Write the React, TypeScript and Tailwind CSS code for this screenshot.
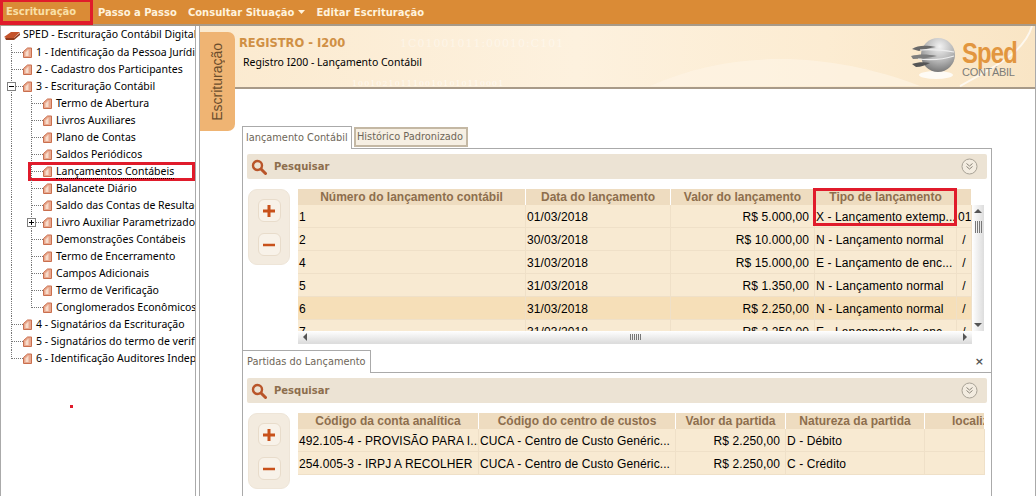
import React from "react";

const tree: { label: string; level: number; toggle?: "minus" | "plus"; last?: boolean; selected?: boolean }[] = [
  { label: "1 - Identificação da Pessoa Jurídica", level: 1 },
  { label: "2 - Cadastro dos Participantes", level: 1 },
  { label: "3 - Escrituração Contábil", level: 1, toggle: "minus" },
  { label: "Termo de Abertura", level: 2 },
  { label: "Livros Auxiliares", level: 2 },
  { label: "Plano de Contas", level: 2 },
  { label: "Saldos Periódicos", level: 2 },
  { label: "Lançamentos Contábeis", level: 2, selected: true },
  { label: "Balancete Diário", level: 2 },
  { label: "Saldo das Contas de Resultado", level: 2 },
  { label: "Livro Auxiliar Parametrizado", level: 2, toggle: "plus" },
  { label: "Demonstrações Contábeis", level: 2 },
  { label: "Termo de Encerramento", level: 2 },
  { label: "Campos Adicionais", level: 2 },
  { label: "Termo de Verificação", level: 2 },
  { label: "Conglomerados Econômicos", level: 2, last: true },
  { label: "4 - Signatários da Escrituração", level: 1 },
  { label: "5 - Signatários do termo de verificação", level: 1 },
  { label: "6 - Identificação Auditores Independentes", level: 1, last: true },
];

function NodeIcon() {
  return (
    <svg width="9" height="11" viewBox="0 0 9 11" className="shrink-0">
      <path d="M.5 10.500V4.500L4.500 1h4v9.500z" fill="#e9a88e" stroke="#c96f4e" strokeWidth="1" />
      <path d="M2.500 5.500 5.500 2.500V9h-3z" fill="#f8dccb" />
    </svg>
  );
}

function ToggleBox({ type }: { type: "minus" | "plus" }) {
  return (
    <span className="absolute left-0 top-[4px] z-10 flex h-[9px] w-[9px] items-center justify-center border border-[#808080] bg-white">
      <span className="relative block h-px w-[5px] bg-black">
        {type === "plus" && <span className="absolute left-[2px] top-[-2px] block h-[5px] w-px bg-black" />}
      </span>
    </span>
  );
}

function TreeRow({ label, level, toggle, last, selected }: (typeof tree)[number]) {
  return (
    <div className="relative flex h-[17px] items-center whitespace-nowrap">
      {/* linhas pontilhadas da arvore */}
      <span className={`absolute left-[10px] top-0 border-l border-dotted border-[#777] ${level === 1 && last ? "h-[9px]" : "h-[17px]"}`} />
      {level === 2 && (
        <span className={`absolute left-[30px] top-0 border-l border-dotted border-[#777] ${last ? "h-[9px]" : "h-[17px]"}`} />
      )}
      <span className={`absolute top-[8px] w-[12px] border-t border-dotted border-[#777] ${level === 1 ? "left-[10px]" : "left-[30px]"}`} />
      {toggle && (
        <span className={`absolute top-0 h-[17px] w-[9px] ${level === 1 ? "left-[6px]" : "left-[26px]"}`}>
          <ToggleBox type={toggle} />
        </span>
      )}
      <span className={`z-10 flex items-center gap-[4px] ${level === 1 ? "ml-[22px]" : "ml-[42px]"}`}>
        <NodeIcon />
        <span className={selected ? "border-b border-dotted border-black leading-[13px]" : ""}>{label}</span>
      </span>
      {selected && <span className="absolute left-[27px] top-[-1px] h-[19px] w-[167px] border-[3px] border-[#e01b2b]" />}
    </div>
  );
}

function SearchBar() {
  return (
    <div className="flex h-[25px] items-center justify-between rounded-[2px] bg-[#ece3d4] pl-[4px] pr-[9px]">
      <div className="flex items-center gap-[7px]">
        <svg width="16" height="16" viewBox="0 0 16 16">
          <circle cx="6.500" cy="6.500" r="4.500" fill="none" stroke="#b9552a" strokeWidth="2.400" />
          <path d="M10 10l4.500 4.500" stroke="#b9552a" strokeWidth="3" strokeLinecap="round" />
        </svg>
        <span className="font-['DejaVu_Sans'] text-[10px] font-bold text-[#8d6e4d]">Pesquisar</span>
      </div>
      <svg width="17" height="17" viewBox="0 0 17 17">
        <circle cx="8.500" cy="8.500" r="7.500" fill="#f3ece0" stroke="#a8a296" strokeWidth="1" />
        <path d="M5.500 5.500 8.500 8l3-2.500M5.500 8.500 8.500 11l3-2.500" fill="none" stroke="#8a8478" strokeWidth="1" />
      </svg>
    </div>
  );
}

function AddRemove() {
  return (
    <div className="flex h-[76px] w-[42px] shrink-0 flex-col items-center gap-[11px] rounded-[9px] border border-[#eee5d8] bg-[#f3ebdf] pt-[9px]">
      <div className="flex h-[23px] w-[23px] items-center justify-center rounded-[6px] border border-[#e8dccb] bg-[#f8f2e9]">
        <svg width="14" height="14" viewBox="0 0 14 14">
          <path d="M7 1v12M1 7h12" stroke="#c8511b" strokeWidth="3" />
        </svg>
      </div>
      <div className="flex h-[23px] w-[23px] items-center justify-center rounded-[6px] border border-[#e8dccb] bg-[#f8f2e9]">
        <svg width="14" height="14" viewBox="0 0 14 14">
          <path d="M1 7h12" stroke="#c8511b" strokeWidth="2.500" />
        </svg>
      </div>
    </div>
  );
}

function Cell({ text, width, right, center }: { text: string; width: number; right?: boolean; center?: boolean }) {
  return (
    <div
      style={{ width }}
      className={`h-full shrink-0 overflow-hidden whitespace-nowrap border-r border-[#efe0c8] px-[1px] leading-[24px] tracking-[0.1px] ${right ? "pr-[5px] text-right" : ""} ${center ? "text-center" : ""}`}
    >
      {text}
    </div>
  );
}

function HeaderRow({ cols }: { cols: { title: string; width: number }[] }) {
  return (
    <div className="flex h-[16px] font-bold text-[#8d6e4d]">
      {cols.map((c) => (
        <div
          key={c.title}
          style={{ width: c.width }}
          className={`shrink-0 overflow-hidden whitespace-nowrap border-r border-white bg-[#eedcc0] leading-[17px] ${c.title === "localização" ? "pl-[27px] text-left" : "text-center"}`}
        >
          {c.title}
        </div>
      ))}
    </div>
  );
}

const cols1 = [
  { title: "Número do lançamento contábil", width: 228 },
  { title: "Data do lançamento", width: 145 },
  { title: "Valor do lançamento", width: 144 },
  { title: "Tipo de lançamento", width: 142 },
  { title: "", width: 15 },
];

const rows1 = [
  ["1", "01/03/2018", "R$ 5.000,00", "X - Lançamento extemp...", "01"],
  ["2", "30/03/2018", "R$ 10.000,00", "N - Lançamento normal", "/"],
  ["4", "31/03/2018", "R$ 15.000,00", "E - Lançamento de enc...", "/"],
  ["5", "31/03/2018", "R$ 1.350,00", "N - Lançamento normal", "/"],
  ["6", "31/03/2018", "R$ 2.250,00", "N - Lançamento normal", "/"],
  ["7", "31/03/2018", "R$ 2.250,00", "E - Lançamento de enc...", "/"],
];

const cols2 = [
  { title: "Código da conta analítica", width: 181 },
  { title: "Código do centro de custos", width: 197 },
  { title: "Valor da partida", width: 110 },
  { title: "Natureza da partida", width: 139 },
  { title: "localização", width: 60 },
];

const rows2 = [
  ["492.105-4 - PROVISÃO PARA I...", "CUCA - Centro de Custo Genéric...", "R$ 2.250,00", "D - Débito", ""],
  ["254.005-3 - IRPJ A RECOLHER", "CUCA - Centro de Custo Genéric...", "R$ 2.250,00", "C - Crédito", ""],
];

function Arrow({ dir }: { dir: "up" | "down" | "left" | "right" }) {
  const d = { up: "M4 2 8 6H0z", down: "M4 6 0 2h8z", left: "M2 4 6 0v8z", right: "M6 4 2 8V0z" }[dir];
  return (
    <svg width="8" height="8" viewBox="0 0 8 8">
      <path d={d} fill="#555" />
    </svg>
  );
}

function Grip({ vertical }: { vertical?: boolean }) {
  return (
    <span className={`block bg-[repeating-linear-gradient(90deg,#777_0_1px,transparent_1px_2px)] ${vertical ? "h-[12px] w-[7px]" : "h-[6px] w-[11px]"}`} />
  );
}

function Sped() {
  return (
    <div className="absolute right-[23px] top-[10px] flex items-center gap-[4px]">
      <svg width="48" height="44" viewBox="0 0 48 44">
        <defs>
          <radialGradient id="esfera" cx="55%" cy="25%" r="80%">
            <stop offset="0" stopColor="#f2f2f2" />
            <stop offset="0.55" stopColor="#b4b4b4" />
            <stop offset="1" stopColor="#6f6f6f" />
          </radialGradient>
        </defs>
        <ellipse cx="26" cy="39" rx="17" ry="4" fill="#fff" opacity="0.8" />
        <circle cx="28" cy="19" r="17" fill="url(#esfera)" />
        <path d="M2 13c6-4 14-4 24-2-6 1-12 2-17 4z" fill="#6a6a6a" />
        <path d="M1 20c8-2 16-2 26 0-8 2-17 3-24 3z" fill="#7e7e7e" />
        <path d="M2 28c6-2 12-2 18-1-4 2-9 4-14 4z" fill="#555" />
        <path d="M10 14c10-1 22 0 34 2M8 23c10 1 24 1 36-3" fill="none" stroke="#eee" strokeWidth="1.200" />
      </svg>
      <div className="flex w-[50px] flex-col items-start font-['Liberation_Sans']">
        <span className="inline-block origin-left scale-x-[0.82] text-[29px] font-bold leading-[28px] tracking-[-1px] text-[#e2963f]">Sped</span>
        <span className="text-[11px] leading-[10px] tracking-[-0.300px] text-[#7c7c78]">CONTÁBIL</span>
      </div>
    </div>
  );
}

export default function App() {
  return (
    <div className="flex h-[496px] w-[1036px] flex-col overflow-hidden bg-white font-['Liberation_Sans',sans-serif] text-[12px] text-black">
      {/* Menu superior */}
      <div className="flex h-[26px] shrink-0 items-center gap-[11px] border-b-2 border-[#a89a88] bg-[#da8b36] font-['DejaVu_Sans'] text-[10px] font-bold text-[#fff3dd]">
        <div className="flex h-[26px] w-[93px] items-center border-[3px] border-b-[4px] border-[#e01b2b] pl-[3px] text-[#f9e0a8]">
          Escrituração
        </div>
        <span className="ml-[-6px]">Passo a Passo</span>
        <span className="flex items-center gap-[4px]">
          Consultar Situação
          <svg width="7" height="4" viewBox="0 0 7 4">
            <path d="M0 0h7L3.500 4z" fill="#fff3dd" />
          </svg>
        </span>
        <span>Editar Escrituração</span>
      </div>

      <div className="flex min-h-0 flex-1">
        {/* Arvore lateral */}
        <div className="relative w-[196px] shrink-0 border-x border-[#aaa] bg-white font-['Noto_Sans'] text-[10.500px]">
          <div className="relative w-[194px] overflow-x-clip">
            <div className="flex h-[18px] items-center gap-[3px] pl-[3px] whitespace-nowrap">
              <svg width="16" height="9" viewBox="0 0 16 9" className="shrink-0">
                <path d="M0 6 7 1h9L10 7H2z" fill="#c4532b" />
                <path d="M1 7h9l6-5v2l-6 5H2z" fill="#8e3a1c" />
              </svg>
              <span>SPED - Escrituração Contábil Digital</span>
            </div>
            {tree.map((n) => (
              <TreeRow key={n.label} {...n} />
            ))}
          </div>
          <span className="absolute left-[69px] top-[379px] h-[3px] w-[3px] bg-[#e01b2b]" />
        </div>

        {/* Conteudo principal */}
        <div className="relative ml-[3px] flex min-w-0 flex-1 flex-col border-x border-[#aaa]">
          <div className="relative h-[63px] shrink-0 overflow-hidden border-b-2 border-[#a89a88] bg-[linear-gradient(90deg,#fbeacf_0%,#fdf1de_45%,#fcecd2_75%,#f9e5c5_100%)]">
            <svg className="absolute inset-0 h-full w-full" viewBox="0 0 835 63" preserveAspectRatio="none">
              <path d="M450 62C540 20 640 30 720 62Z" fill="#fdf3e4" opacity="0.7" />
              <path d="M760 62C800 40 825 25 832 0" fill="none" stroke="#fff" strokeWidth="2" opacity="0.7" />
            </svg>
            <span className="absolute left-[200px] top-[10px] font-['DejaVu_Serif'] text-[11px] tracking-[1px] text-white opacity-40">1C01001011:00010:C101</span>
            <span className="absolute left-[152px] top-[52px] font-['DejaVu_Serif'] text-[8px] tracking-[1px] text-white opacity-60">1001021011100101010110001</span>
            <div className="relative pl-[39px] pt-[10px]">
              <div className="font-['DejaVu_Sans'] text-[11.500px] leading-[15px] font-bold text-[#d09045]">REGISTRO - I200</div>
              <div className="pl-[4px] pt-[4px] font-['Noto_Sans'] text-[10.500px] leading-[15px]">Registro I200 - Lançamento Contábil</div>
            </div>
            <Sped />
          </div>

          {/* Aba vertical */}
          <div className="absolute left-0 top-[6px] flex h-[99px] w-[35px] items-center justify-center rounded-r-[7px] bg-[#efb473] text-[14px] text-[#6b4d2c]">
            <span className="rotate-180 [writing-mode:vertical-rl]">Escrituração</span>
          </div>

          <div className="ml-[42px] mt-[37px] flex w-[750px] flex-1 flex-col">
            <div className="flex h-[22px] items-end font-['DejaVu_Sans'] text-[9.800px] text-[#6e6658]">
              <div className="relative top-px z-10 flex h-[23px] w-[110px] items-center border border-b-0 border-[#aaa] bg-white pl-[3px]">lançamento Contábil</div>
              <div className="mb-[1px] ml-[2px] flex h-[20px] w-[114px] items-center border-2 border-[#c4b8a4] bg-[#f6efe3] pl-[1px]">Histórico Padronizado</div>
            </div>
            <div className="flex flex-1 flex-col border-x border-t border-[#aaa]">
              <div className="px-[4px] pt-[5px]">
                <SearchBar />
                <div className="mt-[10px] flex gap-[8px] pl-[1px]">
                  <AddRemove />
                  <div className="w-[687px]">
                    <div className="relative w-[674px]">
                      <HeaderRow cols={cols1} />
                      <span className="absolute left-[515px] top-[-1px] h-[38px] w-[144px] border-[3px] border-[#e01b2b]" />
                    </div>
                    <div className="flex">
                      <div className="h-[126px] w-[674px] overflow-hidden">
                        {rows1.map((r, i) => (
                          <div key={r[0]} className={`flex h-[23px] border-b border-[#efe0c8] ${i === 4 ? "bg-[#f6dfb8]" : "bg-[#f8ead2]"}`}>
                            <Cell text={r[0]} width={228} />
                            <Cell text={r[1]} width={145} />
                            <Cell text={r[2]} width={144} right />
                            <Cell text={r[3]} width={142} />
                            <Cell text={r[4]} width={15} center />
                          </div>
                        ))}
                      </div>
                      <div className="flex h-[126px] w-[12px] flex-col items-center bg-[linear-gradient(90deg,#fff,#ddd)]">
                        <span className="pt-[2px]"><Arrow dir="up" /></span>
                        <span className="mt-[6px]"><Grip vertical /></span>
                        <span className="mt-auto pb-[2px]"><Arrow dir="down" /></span>
                      </div>
                    </div>
                    <div className="flex h-[13px] w-[674px] items-center justify-between border-b border-[#ddd] bg-[linear-gradient(180deg,#fff,#ddd)] px-[3px]">
                      <Arrow dir="left" />
                      <Grip />
                      <Arrow dir="right" />
                    </div>
                  </div>
                </div>
              </div>

              <div className="mt-[6px] flex h-[23px] items-end justify-between border-b border-[#aaa] font-['DejaVu_Sans'] text-[9.800px] text-[#6e6658]">
                <div className="relative top-px flex h-[23px] w-[128px] items-center border border-b-0 border-l-0 border-[#aaa] bg-white pl-[4px]">Partidas do Lançamento</div>
                <span className="mb-[5px] mr-[7px] text-[11px] leading-none font-bold text-[#555]">×</span>
              </div>
              <div className="px-[4px] pt-[5px]">
                <SearchBar />
                <div className="mt-[10px] flex gap-[8px] pl-[1px]">
                  <AddRemove />
                  <div className="w-[687px]">
                    <HeaderRow cols={cols2} />
                    {rows2.map((r) => (
                      <div key={r[0]} className="flex h-[23px] border-b border-[#efe0c8] bg-[#f8ead2]">
                        <Cell text={r[0]} width={181} />
                        <Cell text={r[1]} width={197} />
                        <Cell text={r[2]} width={110} right />
                        <Cell text={r[3]} width={139} />
                        <Cell text={r[4]} width={60} />
                      </div>
                    ))}
                  </div>
                </div>
              </div>
            </div>
          </div>
        </div>
      </div>
    </div>
  );
}
